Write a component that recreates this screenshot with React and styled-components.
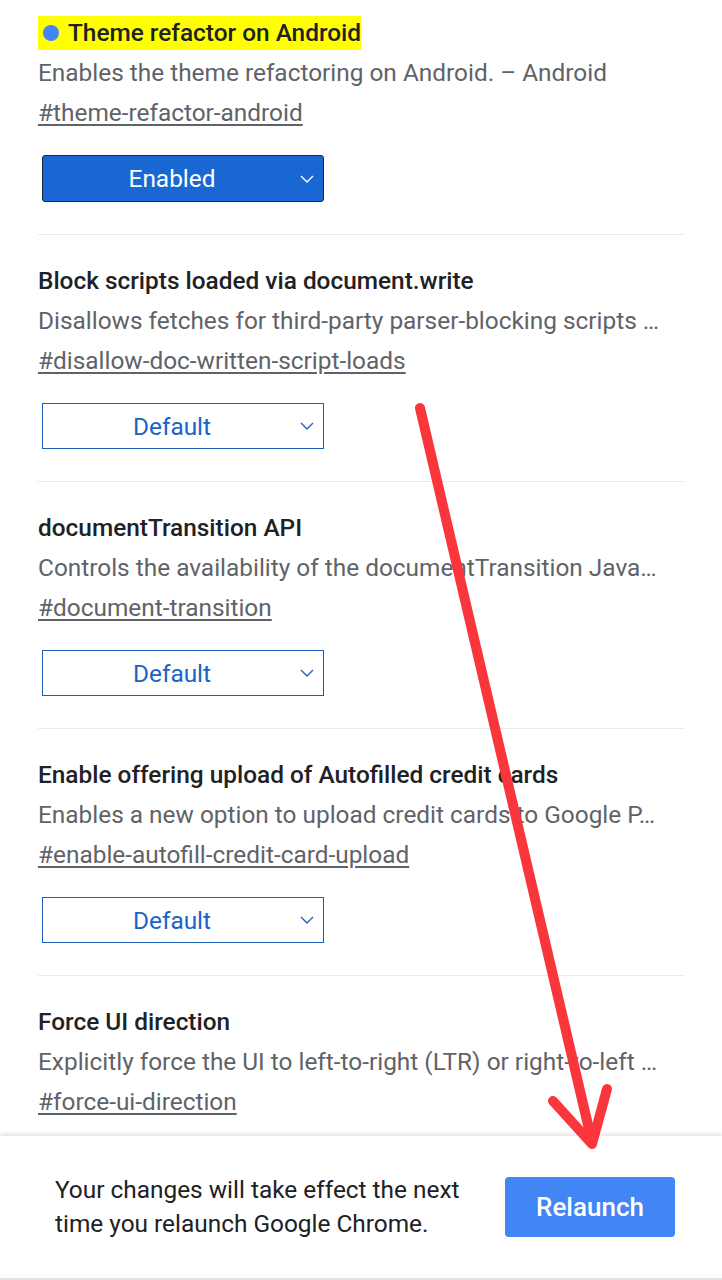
import React from 'react';
import styled, {createGlobalStyle} from 'styled-components';

const GlobalStyle = createGlobalStyle`
  html, body {
    margin: 0;
    padding: 0;
    background: #fff;
  }

  * {
    box-sizing: border-box;
  }
`;

const Page = styled.div`
  position: relative;
  width: 722px;
  height: 1280px;
  display: flex;
  flex-direction: column;
  overflow: hidden;
  font-family: Roboto, "Liberation Sans", sans-serif;
  background: #fff;
`;

const FlagList = styled.div`
  flex: 1;
  min-height: 0;
  overflow: hidden;
  padding: 13px 38px 0;
`;

const Flag = styled.section`
  padding: ${p => (p.first ? '0' : '26px')} 0 32px;
  border-bottom: 1px solid #e8eaed;
`;

const Title = styled.div`
  font-size: 24.4px;
  font-weight: 500;
  line-height: 40px;
  color: #202124;
  white-space: nowrap;
`;

const Highlight = styled.span`
  display: inline-flex;
  align-items: center;
  gap: 9px;
  height: 34px;
  padding-left: 5px;
  background: #ffff00;
`;

const Dot = styled.span`
  width: 16px;
  height: 16px;
  border-radius: 50%;
  background: #4285f4;
`;

const Description = styled.div`
  font-size: 24.4px;
  line-height: 40px;
  color: #5f6368;
  white-space: nowrap;
`;

const FlagLink = styled.a`
  display: block;
  width: max-content;
  font-size: 24.4px;
  line-height: 40px;
  color: #5f6368;
  text-decoration: underline;
  text-underline-offset: 3px;
`;

const Select = styled.div`
  position: relative;
  display: flex;
  align-items: center;
  justify-content: center;
  width: 282px;
  height: ${p => (p.enabled ? '47px' : '46px')};
  margin: 22px 0 0 4px;
  border: 1px solid ${p => (p.enabled ? '#1c2a44' : '#1a5fb4')};
  border-radius: ${p => (p.enabled ? '3px' : '0')};
  background: ${p => (p.enabled ? '#1967d2' : '#fff')};
  color: ${p => (p.enabled ? '#fff' : '#1a63c7')};
  font-size: 24.4px;
  padding-right: 22px;

  svg {
    position: absolute;
    right: 9px;
    top: 50%;
    transform: translateY(-50%);
  }
`;

const BottomBar = styled.div`
  flex: 0 0 144px;
  display: flex;
  align-items: center;
  justify-content: space-between;
  padding: 0 47px 0 55px;
  background: #fff;
  box-shadow: 0 -2px 4px rgba(0, 0, 0, 0.12);
  border-bottom: 2px solid #e3e3e3;
  z-index: 1;
`;

const Notice = styled.div`
  font-size: 24.4px;
  line-height: 34px;
  color: #202124;
`;

const Relaunch = styled.button`
  width: 170px;
  height: 60px;
  border: none;
  border-radius: 4px;
  background: #4285f4;
  color: #fff;
  font-family: inherit;
  font-size: 26px;
  font-weight: 500;
`;

const Annotation = styled.svg`
  position: absolute;
  left: 0;
  top: 0;
  pointer-events: none;
  z-index: 2;
`;

const Chevron = () => (
  <svg width="14" height="8" viewBox="0 0 14 8">
    <polyline points="1,1 7,7 13,1" fill="none" stroke="currentColor" strokeWidth="1.4" />
  </svg>
);

// the last flag's dropdown sits under the relaunch bar, so it has no value
const flags = [
  {
    title: 'Theme refactor on Android',
    desc: 'Enables the theme refactoring on Android. – Android',
    id: 'theme-refactor-android',
    value: 'Enabled',
  },
  {
    title: 'Block scripts loaded via document.write',
    desc: 'Disallows fetches for third-party parser-blocking scripts …',
    id: 'disallow-doc-written-script-loads',
    value: 'Default',
  },
  {
    title: 'documentTransition API',
    desc: 'Controls the availability of the documentTransition Java…',
    id: 'document-transition',
    value: 'Default',
  },
  {
    title: 'Enable offering upload of Autofilled credit cards',
    desc: 'Enables a new option to upload credit cards to Google P…',
    id: 'enable-autofill-credit-card-upload',
    value: 'Default',
  },
  {
    title: 'Force UI direction',
    desc: 'Explicitly force the UI to left-to-right (LTR) or right-to-left …',
    id: 'force-ui-direction',
  },
];

const App = () => (
  <Page>
    <GlobalStyle />
    <FlagList>
      {flags.map((f, i) => (
        <Flag key={f.id} first={i === 0}>
          <Title>
            {i === 0 ? (
              <Highlight><Dot />{f.title}</Highlight>
            ) : f.title}
          </Title>
          <Description>{f.desc}</Description>
          <FlagLink href={`#${f.id}`}>#{f.id}</FlagLink>
          {f.value && (
            <Select enabled={f.value === 'Enabled'}>
              {f.value}
              <Chevron />
            </Select>
          )}
        </Flag>
      ))}
    </FlagList>
    <BottomBar>
      <Notice>
        Your changes will take effect the next<br />
        time you relaunch Google Chrome.
      </Notice>
      <Relaunch>Relaunch</Relaunch>
    </BottomBar>
    <Annotation width="722" height="1280" viewBox="0 0 722 1280">
      <g fill="none" stroke="#f8363c" strokeWidth="10" strokeLinecap="round" strokeLinejoin="round">
        <line x1="420" y1="408" x2="592" y2="1142" />
        <polyline points="553,1101 592,1144 607,1089" />
      </g>
    </Annotation>
  </Page>
);

export default App;
